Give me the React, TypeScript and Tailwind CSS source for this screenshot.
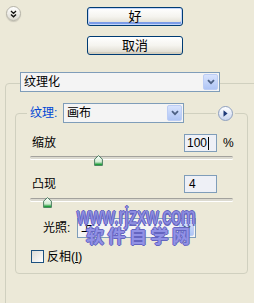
import React from "react";

function Chevron() {
  return (
    <svg width="8" height="6" viewBox="0 0 8 6">
      <path d="M1 1.2 L4 4.2 L7 1.2" fill="none" stroke="#4D6185" strokeWidth="1.8" />
    </svg>
  );
}

function Combo({ text, w }: { text: string; w: string }) {
  return (
    <div className={`flex h-[20px] items-center border border-[#7F9DB9] bg-[#F4F4F4] ${w}`}>
      <span className="flex-1 pl-[3px] text-[12px] leading-none text-black">{text}</span>
      <span className="mr-[1px] flex h-[16px] w-[15px] items-center justify-center rounded-[2px] border border-[#BCCDF5] bg-gradient-to-b from-[#D8E3FD] to-[#AFC5F5]">
        <Chevron />
      </span>
    </div>
  );
}

function Thumb() {
  return (
    <svg width="9" height="11" viewBox="0 0 9 11">
      <defs>
        <linearGradient id="tg" x1="0" y1="0" x2="0" y2="1">
          <stop offset="0" stopColor="#FFFFFF" />
          <stop offset="0.6" stopColor="#D6EED6" />
          <stop offset="1" stopColor="#2E9E46" />
        </linearGradient>
      </defs>
      <path d="M4.5 0.6 L8.4 4.2 L8.4 10.4 L0.6 10.4 L0.6 4.2 Z" fill="url(#tg)" stroke="#4D7E62" strokeWidth="1" />
      <path d="M1.2 9.4 L7.8 9.4" stroke="#21A13B" strokeWidth="1.4" />
    </svg>
  );
}

function Slider({ left }: { left: number }) {
  return (
    <div className="relative ml-[14px] h-[10px] w-[203px]">
      <div className="mt-[4px] h-[3px] w-full rounded-[2px] border-t border-[#A3A29D] bg-[#DCDAD0] shadow-[0_1px_0_#FFFFFF]" />
      <div className="absolute top-[-1px]" style={{ left }}>
        <Thumb />
      </div>
    </div>
  );
}

export default function App() {
  const btn =
    "flex h-[19px] w-[96px] items-center justify-center rounded-[3px] border border-[#003C74] bg-gradient-to-b from-[#FFFFFF] via-[#F5F4EF] to-[#DCD8CC] text-[13px] leading-none text-black";
  return (
    <div className="relative h-[303px] w-[254px] overflow-hidden bg-[#ECE9D8] font-['Liberation_Sans','Noto_Sans_CJK_SC',sans-serif] text-[12px] text-black">
      <div className="flex pt-[7px]">
        <div className="-mt-[1px] ml-[6px] flex h-[15px] w-[15px] items-center justify-center rounded-full border border-[#B5B3A8] bg-gradient-to-b from-[#FFFFFF] to-[#DCDAD2] shadow-[0_1px_1px_#C8C5B8]">
          <svg width="7" height="8" viewBox="0 0 7 8">
            <path d="M1 1 L3.5 3.4 L6 1 M1 4.4 L3.5 6.8 L6 4.4" fill="none" stroke="#111" strokeWidth="1.4" />
          </svg>
        </div>
        <div className="ml-[66px] flex flex-col gap-[10px]">
          <button className={`${btn} shadow-[inset_0_0_0_1px_#C3D5FB,inset_0_-2px_0_1px_#7C9CE8]`}>好</button>
          <button className={`${btn} shadow-[inset_0_-2px_0_0_#D3CEBF]`}>取消</button>
        </div>
      </div>

      <div className="ml-[5px] mt-[28px] h-[240px] w-[260px] rounded-[4px] border border-[#D0D0BF]">
        <div className="-mt-[12px] ml-[14px]">
          <Combo text="纹理化" w="w-[200px]" />
        </div>

        <div className="ml-[9px] mt-[21px] h-[161px] w-[233px] rounded-[4px] border border-[#D0D0BF]">
          <div className="-mt-[11px] flex h-[20px] items-center">
            <span className="ml-[11px] w-[36px] bg-[#ECE9D8] pl-[3px] text-[12px] leading-none text-[#0046D5]">纹理:</span>
            <Combo text="画布" w="w-[121px]" />
            <span className="ml-[32px] bg-[#ECE9D8] px-[2px]">
              <span className="flex h-[15px] w-[15px] items-center justify-center rounded-full border border-[#8E9FBF] bg-gradient-to-b from-[#FFFFFF] to-[#C9D5EE]">
                <svg width="5" height="7" viewBox="0 0 5 7">
                  <path d="M0.5 0.3 L4.6 3.5 L0.5 6.7 Z" fill="#1F3A78" />
                </svg>
              </span>
            </span>
          </div>

          <div className="mt-[11px] flex h-[18px] items-center pl-[16px]">
            <span className="w-[152px] leading-none">缩放</span>
            <span className="flex h-[18px] w-[33px] items-center border border-[#7F9DB9] bg-[#EEF0F6] pl-[2px] leading-none">
              100<span className="ml-[1px] h-[13px] w-[1px] bg-black" />
            </span>
            <span className="ml-[6px] leading-none">%</span>
          </div>
          <div className="mt-[4px]">
            <Slider left={64} />
          </div>

          <div className="mt-[9px] flex h-[18px] items-center pl-[16px]">
            <span className="w-[152px] leading-none">凸现</span>
            <span className="flex h-[18px] w-[33px] items-center border border-[#7F9DB9] bg-[#EEF0F6] pl-[4px] leading-none">4</span>
          </div>
          <div className="mt-[5px]">
            <Slider left={13} />
          </div>

          <div className="mt-[10px] flex items-center pl-[27px]">
            <span className="w-[34px] leading-none">光照:</span>
            <Combo text="上" w="w-[119px]" />
          </div>

          <div className="mt-[12px] flex items-center pl-[15px]">
            <span className="h-[13px] w-[13px] border border-[#1C5180] bg-gradient-to-br from-[#DCDCD7] to-[#FFFFFF]" />
            <span className="ml-[3px] leading-none">
              反相(<span className="underline">I</span>)
            </span>
          </div>
        </div>
      </div>

      <div className="pointer-events-none absolute left-[77px] top-[204px] flex flex-col items-start">
        <span className="origin-top scale-y-[1.35] text-[17.5px] leading-[18px] text-[#9A9AEC]/80 [text-shadow:1px_0_#6464C0,-1px_0_#6464C0,0_1px_#6464C0,0_-1px_#6464C0]">
          www.rjzxw.com
        </span>
        <span className="ml-[9px] mt-[5px] text-[18px] font-bold leading-[20px] tracking-[3.5px] text-[#9A9AEC]/85 [text-shadow:1px_0_#6464C0,-1px_0_#6464C0,0_1px_#6464C0,0_-1px_#6464C0]">
          软件自学网
        </span>
      </div>
    </div>
  );
}
